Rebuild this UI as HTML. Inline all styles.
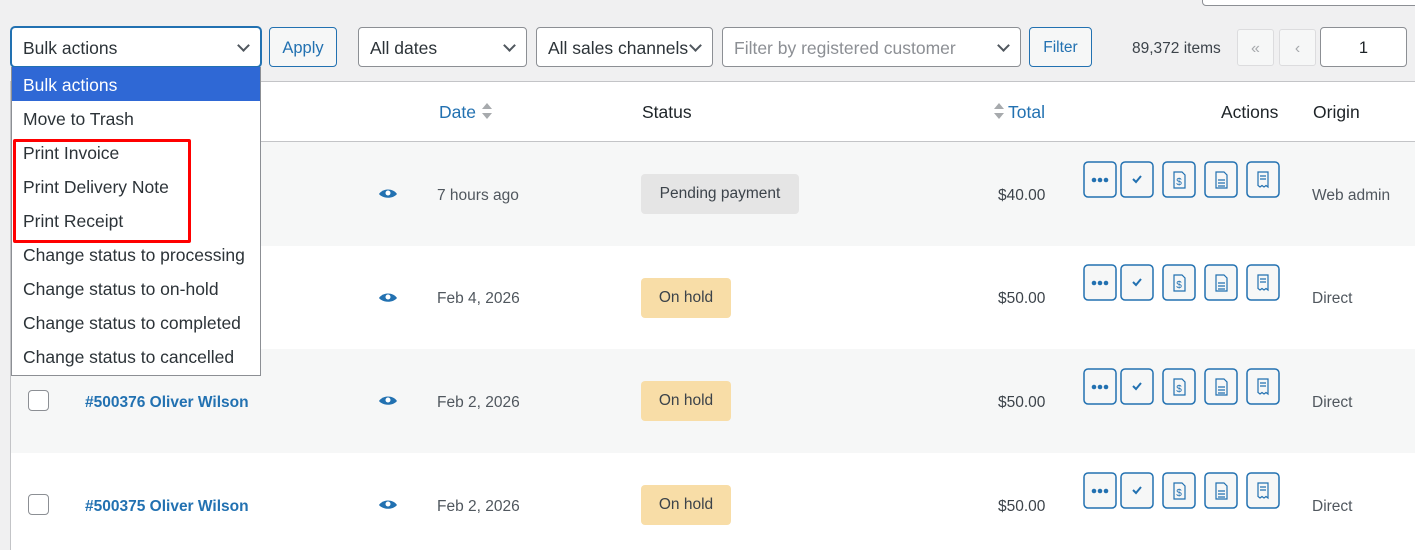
<!DOCTYPE html>
<html><head><meta charset="utf-8"><style>
*{box-sizing:border-box;margin:0;padding:0}
body{width:1415px;height:550px;overflow:hidden;background:#f0f0f1;font-family:"Liberation Sans",sans-serif;color:#1d2327;position:relative}
.a{position:absolute}
.sel{position:absolute;height:40px;background:#fff;border:1px solid #8c8f94;border-radius:4px;font-size:17.5px;line-height:40px;padding-left:11px;color:#2c3338}
.chev{position:absolute;right:12px;top:13px;width:9px;height:9px;border-right:2px solid #50575e;border-bottom:2px solid #50575e;transform:rotate(45deg)}
.btn{position:absolute;height:40px;border:1px solid #2271b1;border-radius:4px;background:#f6f7f7;color:#2271b1;font-size:16.5px;line-height:40px;text-align:center}
.row{position:absolute;left:11px;width:1404px}
.cb{position:absolute;left:28px;width:21px;height:21px;border:1px solid #8c8f94;border-radius:4px;background:#fff}
.lnk{position:absolute;left:85px;color:#2271b1;font-weight:bold;font-size:15.5px}
.t{position:absolute;font-size:15.5px;color:#50575e}
.pill{position:absolute;left:641px;height:40px;border-radius:4px;font-size:15.5px;line-height:40px;text-align:center;color:#3c434a}
.dd{position:absolute;left:11px;top:67px;width:250px;height:309px;background:#fff;border:1px solid #8c8f94;border-top:none}
.dd div{height:34px;line-height:36px;padding-left:11px;font-size:17.5px;color:#2c3338;white-space:nowrap}
</style></head><body>
<div class="a" style="left:1202px;top:-4px;width:220px;height:10px;border:1px solid #8c8f94;border-radius:4px;background:#fff"></div>
<div class="sel" style="left:11px;top:27px;width:250px;border-color:#2271b1;box-shadow:0 0 0 1px #2271b1">Bulk actions<span class="chev"></span></div>
<div class="btn" style="left:269px;top:27px;width:68px">Apply</div>
<div class="sel" style="left:358px;top:27px;width:169px">All dates<span class="chev"></span></div>
<div class="sel" style="left:536px;top:27px;width:177px">All sales channels<span class="chev"></span></div>
<div class="sel" style="left:722px;top:27px;width:299px;color:#8c8f94">Filter by registered customer<span class="chev"></span></div>
<div class="btn" style="left:1029px;top:27px;width:63px;font-size:15.5px">Filter</div>
<div class="t" style="left:1132px;top:40px;color:#3c434a">89,372 items</div>
<div class="a" style="left:1237px;top:29px;width:37px;height:37px;border:1px solid #dcdcde;border-radius:3px;background:#f6f7f7;color:#a7aaad;text-align:center;line-height:37px;font-size:16px">«</div>
<div class="a" style="left:1279px;top:29px;width:37px;height:37px;border:1px solid #dcdcde;border-radius:3px;background:#f6f7f7;color:#a7aaad;text-align:center;line-height:37px;font-size:16px">‹</div>
<div class="a" style="left:1320px;top:27px;width:87px;height:40px;border:1px solid #8c8f94;border-radius:4px;background:#fff;text-align:center;line-height:40px;font-size:16.5px">1</div>

<div class="a" style="left:10px;top:81px;width:1405px;height:469px;background:#fff;border-top:1px solid #c3c4c7;border-left:1px solid #c3c4c7"></div>
<div class="a" style="left:11px;top:141px;width:1404px;height:1px;background:#c3c4c7"></div>
<div class="a" style="left:439px;top:102px;font-size:17.5px;color:#2271b1">Date</div>
<svg class="a" style="left:481px;top:101px" width="12" height="20"><path d="M1 8L6 2L11 8Z M1 12L6 18L11 12Z" fill="#a7aaad"/></svg>
<div class="a" style="left:642px;top:102px;font-size:17.5px">Status</div>
<svg class="a" style="left:993px;top:101px" width="12" height="20"><path d="M1 8L6 2L11 8Z M1 12L6 18L11 12Z" fill="#a7aaad"/></svg>
<div class="a" style="left:1008px;top:102px;font-size:17.5px;color:#2271b1">Total</div>
<div class="a" style="left:1221px;top:102px;font-size:17.5px">Actions</div>
<div class="a" style="left:1313px;top:102px;font-size:17.5px">Origin</div>

<div class="row" style="top:142px;height:104px;background:#f6f7f7"></div>
<div class="row" style="top:349px;height:104px;background:#f6f7f7"></div>

<div class="a" style="left:378px;top:187px"><svg width="20" height="12"><path d="M1 6C5 0 15 0 19 6C15 11 5 11 1 6Z" fill="#2271b1"/><circle cx="10" cy="5" r="2.5" fill="#fff"/></svg></div>
<div class="t" style="left:437px;top:187px">7 hours ago</div>
<div class="pill" style="top:174px;width:158px;background:#e5e5e5">Pending payment</div>
<div class="t" style="left:998px;top:187px;color:#3c434a">$40.00</div>
<div class="t" style="left:1312px;top:187px">Web admin</div>

<div class="a" style="left:378px;top:291px"><svg width="20" height="12"><path d="M1 6C5 0 15 0 19 6C15 11 5 11 1 6Z" fill="#2271b1"/><circle cx="10" cy="5" r="2.5" fill="#fff"/></svg></div>
<div class="t" style="left:437px;top:290px">Feb 4, 2026</div>
<div class="pill" style="top:278px;width:90px;background:#f8dda7">On hold</div>
<div class="t" style="left:998px;top:290px;color:#3c434a">$50.00</div>
<div class="t" style="left:1312px;top:290px">Direct</div>

<div class="cb" style="top:390px"></div>
<div class="lnk" style="top:394px">#500376 Oliver Wilson</div>
<div class="a" style="left:378px;top:394px"><svg width="20" height="12"><path d="M1 6C5 0 15 0 19 6C15 11 5 11 1 6Z" fill="#2271b1"/><circle cx="10" cy="5" r="2.5" fill="#fff"/></svg></div>
<div class="t" style="left:437px;top:394px">Feb 2, 2026</div>
<div class="pill" style="top:381px;width:90px;background:#f8dda7">On hold</div>
<div class="t" style="left:998px;top:394px;color:#3c434a">$50.00</div>
<div class="t" style="left:1312px;top:394px">Direct</div>

<div class="cb" style="top:494px"></div>
<div class="lnk" style="top:498px">#500375 Oliver Wilson</div>
<div class="a" style="left:378px;top:498px"><svg width="20" height="12"><path d="M1 6C5 0 15 0 19 6C15 11 5 11 1 6Z" fill="#2271b1"/><circle cx="10" cy="5" r="2.5" fill="#fff"/></svg></div>
<div class="t" style="left:437px;top:498px">Feb 2, 2026</div>
<div class="pill" style="top:485px;width:90px;background:#f8dda7">On hold</div>
<div class="t" style="left:998px;top:498px;color:#3c434a">$50.00</div>
<div class="t" style="left:1312px;top:498px">Direct</div>

<svg class="a" style="left:1082px;top:160px" width="200" height="350">
<defs>
<g id="ab">
<rect x="2" y="2" width="32" height="35" rx="4" fill="#f6f7f7" stroke="#2271b1" stroke-width="1.5"/>
<circle cx="12" cy="20" r="2.3" fill="#2271b1"/><circle cx="18" cy="20" r="2.3" fill="#2271b1"/><circle cx="24" cy="20" r="2.3" fill="#2271b1"/>
<rect x="39" y="2" width="32" height="35" rx="4" fill="#f6f7f7" stroke="#2271b1" stroke-width="1.5"/>
<path d="M51 19l3 3 5-6" fill="none" stroke="#2271b1" stroke-width="2"/>
<rect x="81" y="2" width="32" height="35" rx="4" fill="#f6f7f7" stroke="#2271b1" stroke-width="1.5"/>
<path d="M92 12h8l3 3v13h-11z" fill="none" stroke="#2271b1" stroke-width="1.2"/><text x="97" y="25" font-size="10" text-anchor="middle" fill="#2271b1" font-family="Liberation Sans">$</text>
<rect x="123" y="2" width="32" height="35" rx="4" fill="#f6f7f7" stroke="#2271b1" stroke-width="1.5"/>
<path d="M134 12h8l3 3v13h-11z M136 20h7 M136 23h7 M136 26h7" fill="none" stroke="#2271b1" stroke-width="1.2"/>
<rect x="165" y="2" width="32" height="35" rx="4" fill="#f6f7f7" stroke="#2271b1" stroke-width="1.5"/>
<path d="M176 12h10v15l-2-1.5-2 1.5-2-1.5-2 1.5-2-1.5z M178 16h6 M178 19h6" fill="none" stroke="#2271b1" stroke-width="1.2"/>
</g></defs>
<use href="#ab" y="0"/><use href="#ab" y="103"/><use href="#ab" y="207"/><use href="#ab" y="311"/>
</svg>

<div class="dd">
<div style="background:#2f68d5;color:#fff">Bulk actions</div>
<div>Move to Trash</div>
<div>Print Invoice</div>
<div>Print Delivery Note</div>
<div>Print Receipt</div>
<div>Change status to processing</div>
<div>Change status to on-hold</div>
<div>Change status to completed</div>
<div>Change status to cancelled</div>
</div>
<div class="a" style="left:13px;top:139px;width:178px;height:104px;border:3px solid #f00;border-radius:2px"></div>
</body></html>
